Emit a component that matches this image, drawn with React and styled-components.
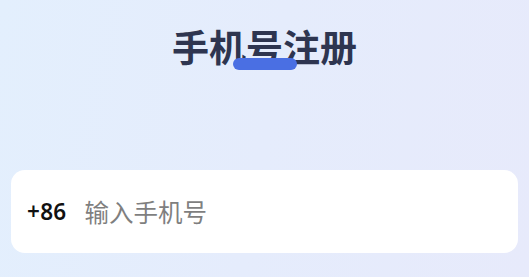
import React from 'react';
import styled, { createGlobalStyle } from 'styled-components';

const GlobalStyle = createGlobalStyle`
  html, body {
    margin: 0;
    padding: 0;
  }
  body {
    font-family: "Noto Sans", "Noto Sans CJK SC", sans-serif;
  }
`;

const Page = styled.div`
  min-height: 277px;
  box-sizing: border-box;
  padding: 24px 11px 0;
  background: linear-gradient(100deg, #e3effd 0%, #e5ecfc 50%, #e7eafb 100%);
  display: flex;
  flex-direction: column;
`;

const TitleWrap = styled.div`
  display: flex;
  justify-content: center;
`;

const Title = styled.h1`
  position: relative;
  margin: 0;
  font-family: "Noto Sans CJK SC", sans-serif;
  font-size: 37px;
  line-height: 44px;
  font-weight: 700;
  color: #2e3550;
  letter-spacing: 0;
`;

const Underline = styled.span`
  position: absolute;
  left: 50%;
  top: 34px;
  width: 64px;
  height: 12px;
  margin-left: -32px;
  border-radius: 6px;
  background: #4a6fe3;
`;

const Field = styled.label`
  margin-top: 102px;
  height: 83px;
  border-radius: 14px;
  background: #ffffff;
  display: flex;
  align-items: center;
  gap: 18px;
  padding: 0 16px;
`;

const Prefix = styled.span`
  font-family: "Noto Sans", sans-serif;
  font-size: 22.5px;
  font-weight: 600;
  color: #111111;
  letter-spacing: 0.3px;
`;

const PhoneInput = styled.input`
  flex: 1;
  border: none;
  outline: none;
  background: transparent;
  padding: 0;
  font-family: "Noto Sans CJK SC", sans-serif;
  font-size: 24.5px;
  font-weight: 400;
  color: #222;

  &::placeholder {
    color: #7f7f7f;
  }
`;

const App = () => (
  <>
    <GlobalStyle />
    <Page>
      <TitleWrap>
        <Title>
          手机号注册
          <Underline />
        </Title>
      </TitleWrap>
      <Field>
        <Prefix>+86</Prefix>
        <PhoneInput type="tel" placeholder="输入手机号" />
      </Field>
    </Page>
  </>
);

export default App;
